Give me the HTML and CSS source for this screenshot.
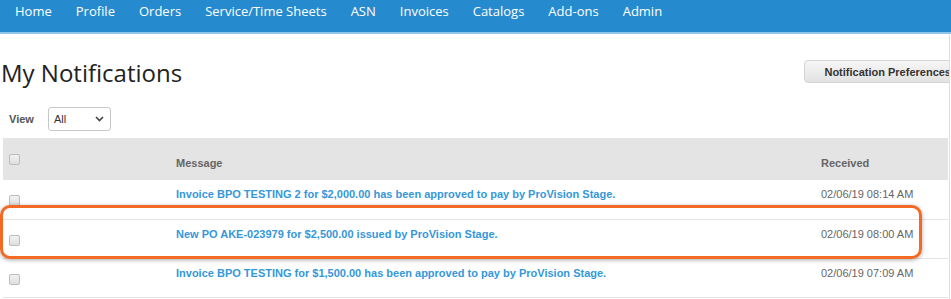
FILE: index.html
```html
<!DOCTYPE html>
<html lang="en">
<head>
    <meta charset="UTF-8">
    <meta name="viewport" content="width=device-width, initial-scale=1.0">
    <title>My Notifications</title>
    <link rel="stylesheet" href="styles.css">
</head>
<body>
    <nav class="topnav">
        <a href="#">Home</a>
        <a href="#">Profile</a>
        <a href="#">Orders</a>
        <a href="#">Service/Time Sheets</a>
        <a href="#">ASN</a>
        <a href="#">Invoices</a>
        <a href="#">Catalogs</a>
        <a href="#">Add-ons</a>
        <a href="#">Admin</a>
    </nav>
    <div class="page">
        <div class="page-header">
            <h1>My Notifications</h1>
            <button class="pref-btn">Notification Preferences</button>
        </div>
        <div class="filter">
            <label>View</label>
            <div class="select">
                <span>All</span>
                <svg width="9" height="6" viewBox="0 0 9 6"><polyline points="1,1 4.5,4.5 8,1" fill="none" stroke="#444" stroke-width="1.6"/></svg>
            </div>
        </div>
        <table class="notes">
            <thead>
                <tr>
                    <th class="col-check"><input type="checkbox"></th>
                    <th class="col-msg">Message</th>
                    <th class="col-date">Received</th>
                </tr>
            </thead>
            <tbody>
                <tr>
                    <td class="col-check"><input type="checkbox"></td>
                    <td class="col-msg"><a href="#">Invoice BPO TESTING 2 for $2,000.00 has been approved to pay by ProVision Stage.</a></td>
                    <td class="col-date">02/06/19 08:14 AM</td>
                </tr>
                <tr>
                    <td class="col-check"><input type="checkbox"></td>
                    <td class="col-msg"><a href="#">New PO AKE-023979 for $2,500.00 issued by ProVision Stage.</a></td>
                    <td class="col-date">02/06/19 08:00 AM</td>
                </tr>
                <tr>
                    <td class="col-check"><input type="checkbox"></td>
                    <td class="col-msg"><a href="#">Invoice BPO TESTING for $1,500.00 has been approved to pay by ProVision Stage.</a></td>
                    <td class="col-date">02/06/19 07:09 AM</td>
                </tr>
            </tbody>
        </table>
        <div class="highlight"></div>
    </div>
</body>
</html>
```

FILE: styles.css
```css
body {
    margin: 0;
    padding: 0;
    font-family: "Liberation Sans", Arial, sans-serif;
    font-size: 11px;
    color: #333;
    background: #fff;
}

.topnav {
    display: flex;
    height: 32px;
    padding-left: 3px;
    background-color: #268bce;
    border-bottom: 2px solid #8fc4e9;
}

.topnav a {
    padding: 0 12px;
    line-height: 23px;
    font-family: "Open Sans", sans-serif;
    font-size: 13px;
    color: #fff;
    text-decoration: none;
}

.page {
    position: relative;
    width: 950px;
    box-sizing: border-box;
    border-right: 1px solid #dedede;
    overflow: hidden;
    height: 265px;
}

.page-header {
    display: flex;
    align-items: flex-start;
    height: 73px;
}

.page-header h1 {
    margin: 23px 0 0 1px;
    font-family: "Open Sans", sans-serif;
    font-size: 24px;
    font-weight: normal;
    line-height: 32px;
    color: #222;
}

.pref-btn {
    margin: 26px -22px 0 auto;
    height: 23px;
    padding: 0 19px;
    font-family: "Liberation Sans", Arial, sans-serif;
    font-size: 11px;
    font-weight: bold;
    color: #333;
    background: linear-gradient(#f6f6f6, #e2e2e2);
    border: 1px solid #d4d4d4;
    border-radius: 4px;
}

.filter {
    display: flex;
    align-items: center;
    height: 24px;
    padding-left: 9px;
}

.filter label {
    width: 39px;
    font-weight: bold;
    color: #555;
}

.select {
    display: flex;
    align-items: center;
    justify-content: space-between;
    width: 63px;
    height: 24px;
    box-sizing: border-box;
    padding: 0 6px 0 5px;
    border: 1px solid #c8c8c8;
    border-radius: 3px;
    color: #333;
}

.notes {
    margin: 7px 0 0 3px;
    width: 945px;
    border-collapse: collapse;
    table-layout: fixed;
}

.notes th,
.notes td {
    padding: 7px 6px 0;
    height: 39px;
    box-sizing: border-box;
    vertical-align: top;
    text-align: left;
    line-height: 14px;
}

.notes th {
    height: 42px;
    padding-top: 18px;
    background-color: #e4e4e4;
    color: #666;
    font-weight: bold;
}

.notes td {
    border-bottom: 1px solid #e3e3e3;
}

.notes .col-check { width: 167px; padding-top: 15px; }
.notes th.col-check { padding-top: 16px; }
.notes .col-date { width: 133px; color: #666; }
.notes th.col-date { color: #666; }

.notes a {
    color: #3597da;
    font-weight: bold;
    text-decoration: none;
}

.notes input[type="checkbox"] {
    appearance: none;
    display: block;
    margin: 0;
    width: 11px;
    height: 11px;
    border: 1px solid #bdbdbd;
    border-radius: 2px;
    background: linear-gradient(#f2f2f2, #dedede);
}

.highlight {
    position: absolute;
    top: 171px;
    left: 0;
    width: 922px;
    height: 54px;
    box-sizing: border-box;
    border: 3px solid #f26a24;
    border-radius: 10px;
    box-shadow: 0 1px 4px rgba(0, 0, 0, 0.35);
}
```
